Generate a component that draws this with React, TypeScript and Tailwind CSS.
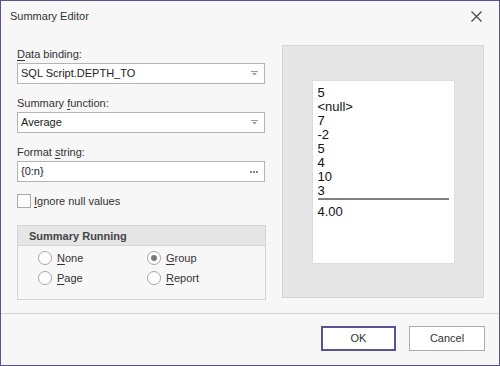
import React from "react";

const font = { fontFamily: '"Liberation Sans", Arial, sans-serif' };

function Acc({ text, index = 0 }: { text: string; index?: number }) {
  return (
    <>
      {text.slice(0, index)}
      <span className="underline underline-offset-[2px]">{text[index]}</span>
      {text.slice(index + 1)}
    </>
  );
}

function DropArrow() {
  return (
    <svg width="7" height="5" viewBox="0 0 7 5">
      <rect x="0" y="0" width="7" height="1" fill="#9a9a9a" />
      <path d="M1 2 H6 L3.5 4.5 Z" fill="#9a9a9a" />
    </svg>
  );
}

function Field({ value, kind }: { value: string; kind: "combo" | "dots" }) {
  return (
    <div className="flex h-[21px] w-[248px] items-center justify-between border border-[#b4b4b4] bg-white pl-[3px] pr-[6px] text-[11px] text-[#222]">
      <span>{value}</span>
      {kind === "combo" ? (
        <DropArrow />
      ) : (
        <div className="flex gap-[1px]">
          <span className="h-[2px] w-[2px] bg-[#888]" />
          <span className="h-[2px] w-[2px] bg-[#888]" />
          <span className="h-[2px] w-[2px] bg-[#888]" />
        </div>
      )}
    </div>
  );
}

function Radio({ label, checked }: { label: string; checked?: boolean }) {
  return (
    <div className="flex h-[20px] w-[109px] items-center gap-[5px]">
      <span className="flex h-[14px] w-[14px] items-center justify-center rounded-full border border-[#a6a6a6] bg-white">
        {checked && <span className="h-[6px] w-[6px] rounded-full bg-[#7a7a7a]" />}
      </span>
      <span className="text-[11px] text-[#333]">
        <Acc text={label} />
      </span>
    </div>
  );
}

const values = ["5", "<null>", "7", "-2", "5", "4", "10", "3"];

export default function App() {
  return (
    <div style={font} className="flex h-[366px] w-[500px] flex-col border border-[#5c5292] bg-[#f7f7f7]">
      <div className="flex h-[30px] items-center justify-between pl-[9px] pr-[17px]">
        <span className="text-[11px] text-[#333]">Summary Editor</span>
        <svg width="11" height="11" viewBox="0 0 11 11">
          <path d="M0.5 0.5 L10.5 10.5 M10.5 0.5 L0.5 10.5" stroke="#4a4a4a" strokeWidth="1.3" />
        </svg>
      </div>

      <div className="flex h-[283px] gap-[17px] border-b border-[#d2d2d2] pl-[16px] pt-[14px]">
        <div className="flex w-[248px] flex-col">
          <div className="h-[18px] text-[11px] leading-[18px] text-[#333]">
            <Acc text="Data binding:" />
          </div>
          <Field value="SQL Script.DEPTH_TO" kind="combo" />
          <div className="mt-[10px] h-[18px] text-[11px] leading-[18px] text-[#333]">
            <Acc text="Summary function:" index={8} />
          </div>
          <Field value="Average" kind="combo" />
          <div className="mt-[10px] h-[18px] text-[11px] leading-[18px] text-[#333]">
            <Acc text="Format string:" index={7} />
          </div>
          <Field value="{0:n}" kind="dots" />

          <div className="mt-[12px] flex h-[14px] items-center gap-[3px]">
            <span className="h-[14px] w-[14px] border border-[#a8a8a8] bg-[#fcfcfc]" />
            <span className="text-[11px] text-[#333]">
              <Acc text="Ignore null values" />
            </span>
          </div>

          <div className="mt-[17px] h-[75px] w-[249px] border border-[#d4d4d4]">
            <div className="h-[20px] border-b border-[#d4d4d4] bg-[#e6e6e6] pl-[11px] text-[11px] font-bold leading-[20px] text-[#444]">
              Summary Running
            </div>
            <div className="grid grid-cols-[109px_109px] pl-[20px] pt-[2px]">
              <Radio label="None" />
              <Radio label="Group" checked />
              <Radio label="Page" />
              <Radio label="Report" />
            </div>
          </div>
        </div>

        <div className="flex h-[253px] w-[202px] items-center justify-center border border-[#d5d5d5] bg-[#e6e6e6]">
          <div className="h-[184px] w-[143px] border border-[#dcdcdc] bg-white px-[5px] pt-[5px] text-[13px] leading-[14px] text-[#111]">
            {values.map((v, i) => (
              <div key={i}>{v}</div>
            ))}
            <div className="h-[2px] bg-[#808080]" />
            <div className="mt-[5px]">4.00</div>
          </div>
        </div>
      </div>

      <div className="flex justify-end gap-[13px] pr-[14px] pt-[12px]">
        <button className="h-[25px] w-[75px] border-2 border-[#5c5292] bg-white text-[11px] text-[#333]">OK</button>
        <button className="h-[25px] w-[76px] border border-[#adadad] bg-white text-[11px] text-[#333]">Cancel</button>
      </div>
    </div>
  );
}
